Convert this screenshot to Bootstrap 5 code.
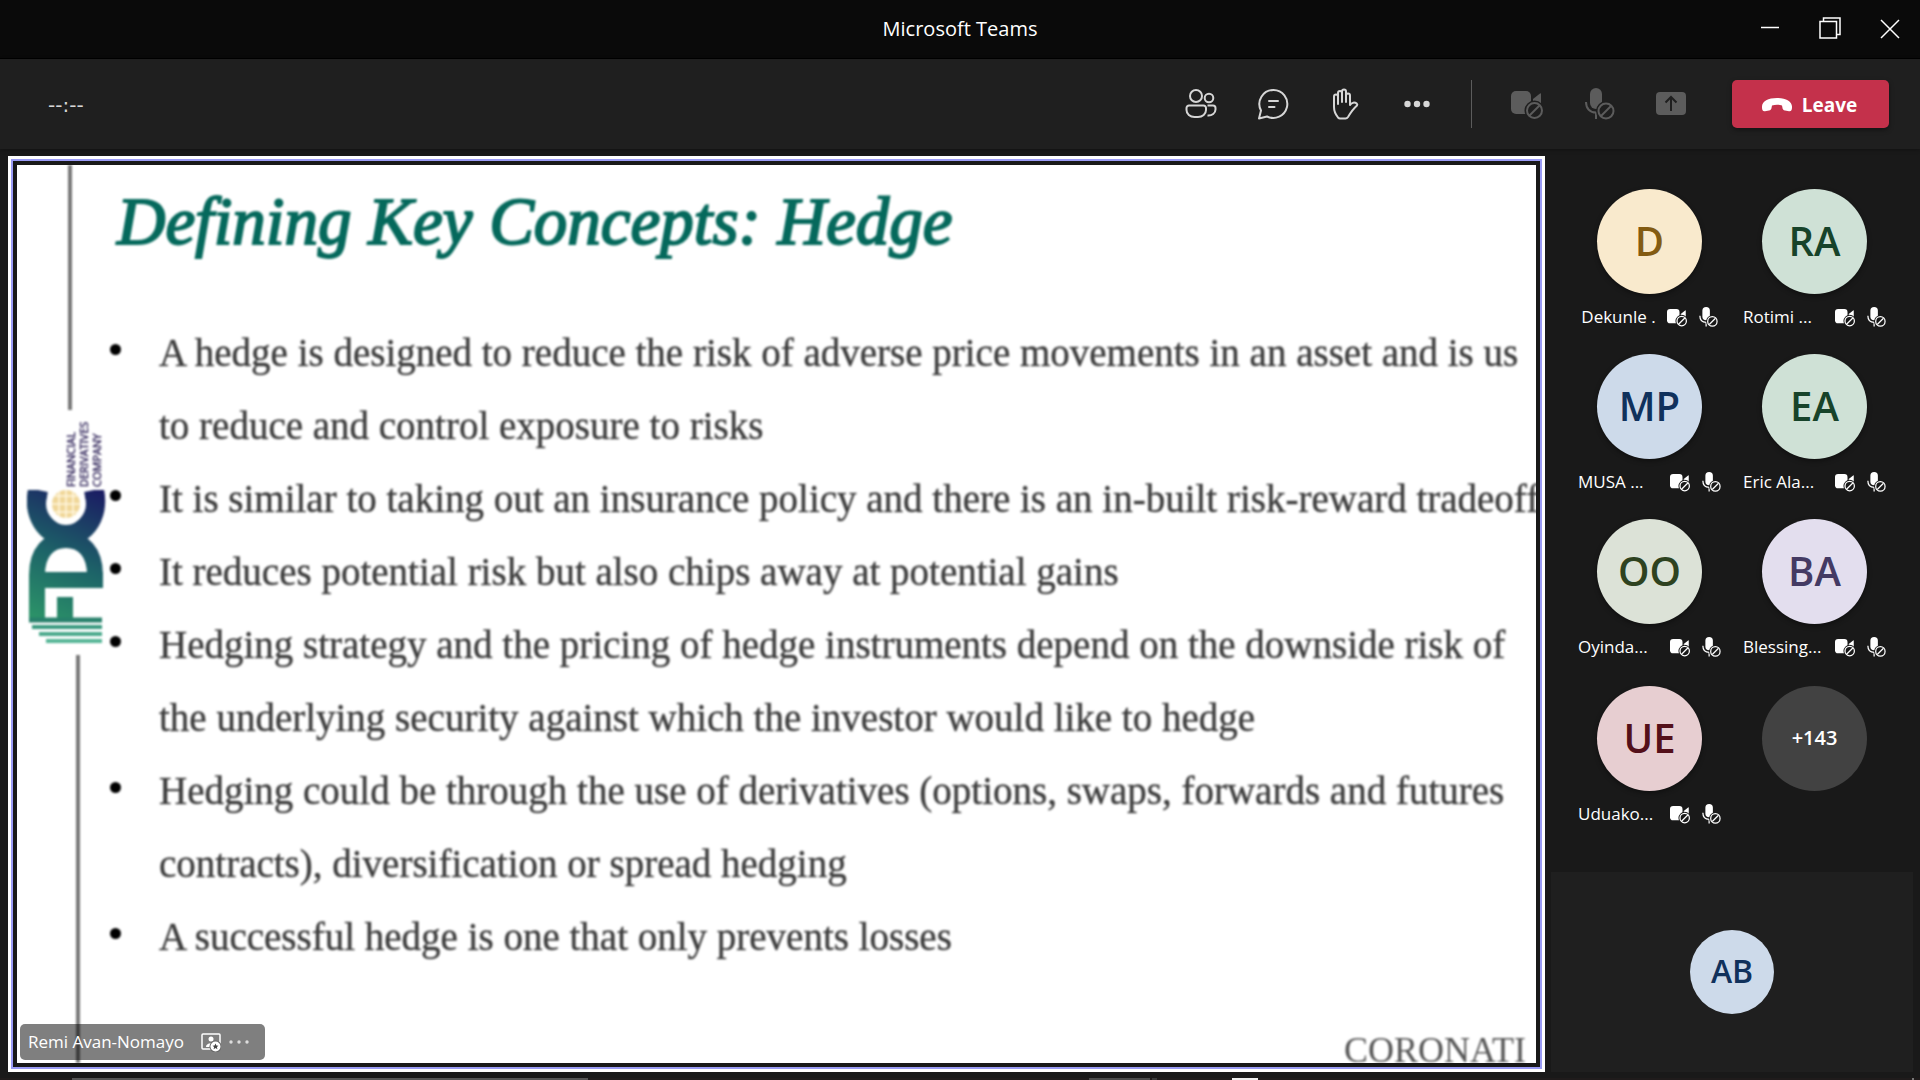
<!DOCTYPE html>
<html lang="en">
<head>
<meta charset="utf-8">
<meta name="viewport" content="width=device-width, initial-scale=1">
<title>Microsoft Teams</title>
<link rel="stylesheet" href="https://cdn.jsdelivr.net/npm/bootstrap@5.3.0/dist/css/bootstrap.min.css">
<style>
  body { background: #191919; color: #fff; font-family: "Open Sans", "Noto Sans", sans-serif; font-size: 17px; line-height: 24px; }
  .titlebar { height: 59px; background: #0a0a0a; border-bottom: 1px solid #000; font-size: 20px; }
  .titlebar-side { flex: 1 1 0; }
  .win-btn { width: 60px; height: 58px; padding: 0 0 4px; border: 0; background: none; color: #fff; }
  .toolbar { height: 90px; background: #1f1f1f; padding: 0 31px 0 48px; box-shadow: 0 1px 4px rgba(0,0,0,.3); }
  .elapsed { font-family: "DejaVu Sans", sans-serif; font-size: 20px; color: #d6d6d6; padding-top: 2px; }
  .tool { width: 72px; height: 48px; padding: 0; border: 0; background: none; color: #d6d6d6; --cut: #1f1f1f; }
  .tool:disabled { color: #5c5c5c; }
  .tool-divider { width: 1px; height: 48px; margin: 0 19px 0 18px; background: #5c5c5c; }
  .leave, .leave:hover { width: 157px; height: 48px; margin-left: 25px; padding: 2px 4px 0 0; border: 0; border-radius: 5px; background: #c4314b; color: #fff; font-size: 19px; font-weight: 700; box-shadow: 0 2px 5px rgba(0,0,0,.4); }
  .meeting { padding: 7px 7px 6px 8px; gap: 6px; min-height: 0; }
  .stage { border: 3px solid #fff; min-width: 0; }
  .stage-ring { border: 2px solid #9a9bf5; padding: 4px; background: #191919; min-width: 0; }
  .slide { background: #fff; color: #3c3c3c; font-family: "Liberation Serif", serif; min-width: 0; }
  .slide-rail { width: 86px; flex: none; padding-left: 10px; }
  .rail-line { width: 4px; background: #777; }
  .rail-top { height: 245px; margin-left: 41px; }
  .rail-bottom { margin-left: 49px; }
  .slide-title { margin: 11px 0 0 14px; font-size: 67px; line-height: 90px; font-style: italic; font-weight: 400; color: #05695c; -webkit-text-stroke: 2px #05695c; white-space: nowrap; }
  .points { margin: 50px 0 0; padding: 0; list-style: none; font-size: 39px; line-height: 73px; -webkit-text-stroke: 1px rgba(60,60,60,.4); }
  .points li { position: relative; padding-left: 56px; white-space: nowrap; }
  .points li::before { content: ""; position: absolute; left: 7px; top: 28px; width: 11px; height: 11px; border-radius: 50%; background: #000; }
  .soft { filter: blur(1px); }
  .maker { right: 0; bottom: -2px; width: 192px; font-size: 36px; line-height: 30px; color: #555; white-space: nowrap; }
  .presenter { left: 3px; bottom: 3px; width: 245px; height: 36px; padding: 0 8px; border-radius: 5px; background: rgba(0,0,0,.5); color: #fff; font-family: "Open Sans", sans-serif; font-size: 17px; }
  .presenter button { padding: 0; border: 0; background: none; color: #ddd; line-height: 0; }
  .people-pane { width: 362px; flex: none; }
  .roster { width: 330px; margin: 33px auto 0; }
  .tile { width: 165px; height: 165px; }
  .last-row { padding-top: 2px; }
  .avatar { width: 105px; height: 105px; padding: 0 0 2px; border-radius: 50%; font-size: 40px; font-weight: 600; box-shadow: 0 2px 5px rgba(0,0,0,.4); }
  .avatar-sm { width: 84px; height: 84px; font-size: 32px; box-shadow: none; }
  .more-people { border: 0; background: #424242; color: #fff; font-size: 20px; box-shadow: none; }
  .who { margin-top: 10px; height: 26px; gap: 11px; --cut: #191919; }
  .who-name { width: 81px; white-space: nowrap; }
  .who-name.short { width: auto; }
  .gold { background: #f9eacd; color: #835b12; }
  .green { background: #cfe1d6; color: #17432a; }
  .blue { background: #cddaea; color: #10315c; }
  .olive { background: #dce2d7; color: #2e4220; }
  .violet { background: #e3deee; color: #443a63; }
  .rose { background: #e7ced1; color: #54101a; }
  .self-view { height: 200px; background: #1f1f1f; }
  .desk-edge { height: 2px; background: #1f1b1b; }
</style>
</head>
<body class="vh-100 d-flex flex-column overflow-hidden">

<svg class="d-none" aria-hidden="true">
  <symbol id="i-nocam" viewBox="0 0 32 32">
    <rect x="0" y="3" width="20" height="23" rx="5" fill="currentColor"/>
    <path d="M22 11l7-5.500q1-.6 1 .6V18l-8-4z" fill="currentColor"/>
    <circle cx="23.500" cy="22.500" r="10" fill="var(--cut)"/>
    <circle cx="23.500" cy="22.500" r="7.500" fill="none" stroke="currentColor" stroke-width="2"/>
    <path d="M18.500 27.500l10-10" stroke="currentColor" stroke-width="2"/>
  </symbol>
  <symbol id="i-nomic" viewBox="0 0 32 32">
    <rect x="7" y="0" width="12" height="21" rx="6" fill="currentColor"/>
    <path d="M3 14c0 6.500 4 10.500 10 10.500M13 24v7" fill="none" stroke="currentColor" stroke-width="2"/>
    <circle cx="23" cy="23" r="10" fill="var(--cut)"/>
    <circle cx="23" cy="23" r="7.500" fill="none" stroke="currentColor" stroke-width="2"/>
    <path d="M18 28l10-10" stroke="currentColor" stroke-width="2"/>
  </symbol>
</svg>

<header class="titlebar d-flex align-items-center flex-shrink-0">
  <div class="titlebar-side"></div>
  <div>Microsoft Teams</div>
  <div class="titlebar-side d-flex justify-content-end">
    <button class="win-btn" type="button" aria-label="Minimise"><svg width="20" height="22" viewBox="0 0 20 22"><path d="M1 10.500h18" stroke="currentColor" stroke-width="1.500"/></svg></button>
    <button class="win-btn" type="button" aria-label="Restore"><svg width="22" height="22" viewBox="0 0 22 22" fill="none" stroke="currentColor" stroke-width="1.500"><path d="M1 4.500h16.500V21H1zM4.500 4.500V1H21v16.500h-3.500"/></svg></button>
    <button class="win-btn" type="button" aria-label="Close"><svg width="20" height="20" viewBox="0 0 20 20"><path d="M1 1l18 18M19 1L1 19" stroke="currentColor" stroke-width="1.500"/></svg></button>
  </div>
</header>

<nav class="toolbar d-flex align-items-center flex-shrink-0 position-relative" aria-label="Meeting controls">
  <span class="elapsed me-auto">--:--</span>
  <button class="tool" type="button" aria-label="Participants"><svg width="32" height="32" viewBox="0 0 32 32" fill="none" stroke="currentColor" stroke-width="2"><circle cx="11" cy="8" r="6"/><circle cx="24" cy="10" r="4.300"/><path d="M4 17.500h14.500a2.500 2.500 0 0 1 2.500 2.500v2c0 4-3.500 7-8 7h-3.500c-4.500 0-8-3-8-7v-2A2.500 2.500 0 0 1 4 17.500zM22.500 17.500H28a2.500 2.500 0 0 1 2.500 2.500v1.500c0 3.500-3.500 6.500-8 6"/></svg></button>
  <button class="tool" type="button" aria-label="Conversation"><svg width="32" height="32" viewBox="0 0 32 32" fill="none" stroke="currentColor" stroke-width="2" stroke-linejoin="round" stroke-linecap="round"><path d="M16.500 2A14 14 0 1 1 10 28.500L2 30.500 4 22.500A14 14 0 0 1 16.500 2zM12 13h9M12 19h5.500"/></svg></button>
  <button class="tool" type="button" aria-label="Raise hand"><svg width="32" height="32" viewBox="-1 0 32 32" fill="none" stroke="currentColor" stroke-width="2" stroke-linecap="round" stroke-linejoin="round"><path d="M8 16V8.500a2 2 0 0 0-4 0V19c0 5 2 8 4 10.500q1 1 2 1h5.500q1.500 0 2.500-1.500c3-5 5-8 9-11.500q.7-1-.2-1.900c-2-1.500-5-1.500-6.800 1.400V7.500a2 2 0 0 0-4 0V14M8 14V5a2 2 0 0 1 4 0v9M12 14V3.500a2 2 0 0 1 4 0V14"/></svg></button>
  <button class="tool" type="button" aria-label="More actions"><svg width="32" height="32" viewBox="0 0 32 32" fill="currentColor"><circle cx="6.500" cy="16" r="3.200"/><circle cx="16" cy="16" r="3.200"/><circle cx="25.500" cy="16" r="3.200"/></svg></button>
  <span class="tool-divider"></span>
  <button class="tool" type="button" disabled aria-label="Camera off"><svg width="32" height="32"><use href="#i-nocam"/></svg></button>
  <button class="tool" type="button" disabled aria-label="Microphone off"><svg width="32" height="32"><use href="#i-nomic"/></svg></button>
  <button class="tool" type="button" disabled aria-label="Share"><svg width="32" height="32" viewBox="0 0 32 32"><rect x="1" y="4" width="30" height="23" rx="4" fill="currentColor"/><path d="M16 23V10M10.500 14.500L16 9l5.500 5.500" fill="none" stroke="#1f1f1f" stroke-width="2"/></svg></button>
  <button class="leave btn d-flex align-items-center justify-content-center gap-2" type="button"><svg width="34" height="16" viewBox="0 0 34 16"><path d="M2 10.500C1.500 4.500 8 1 17 1s15.500 3.500 15 9.500c0 2.500-.8 4-3 3.700l-4-.7c-1.600-.3-2.400-1.200-2.600-3L22 8.500c-3-1-7-1-10 0l-.4 2c-.2 1.800-1 2.700-2.600 3l-4 .7c-2.200.3-3-1.200-3-3.700z" fill="#fff"/></svg>Leave</button>
</nav>

<main class="meeting d-flex flex-fill">
  <section class="stage d-flex flex-fill" aria-label="Shared content">
    <div class="stage-ring d-flex flex-fill">
      <article class="slide d-flex flex-fill position-relative overflow-hidden">
        <div class="slide-rail d-flex flex-column soft">
          <div class="rail-line rail-top"></div>
          <svg width="84" height="245" viewBox="0 0 84 245" role="img" aria-label="FDC logo">
            <defs>
              <linearGradient id="fdc" gradientUnits="userSpaceOnUse" x1="10" y1="225" x2="76" y2="80"><stop offset="0" stop-color="#2f9d68"/><stop offset=".5" stop-color="#1d6468"/><stop offset="1" stop-color="#1b1a63"/></linearGradient>
            </defs>
            <g fill="none" stroke="url(#fdc)" stroke-width="16">
              <path d="M11 80C6 104 18 125 39 125S72 104 67 80" stroke-width="20"/>
              <path d="M10 210V165C10 142 22 130 39 130S68 142 68 165V170M10 170H76"/>
              <path d="M38 187V210"/>
            </g>
            <g fill="none" stroke-width="4">
              <path d="M2 210H75" stroke="#27806a" stroke-width="5"/>
              <path d="M5 217H75" stroke="#3a9a80"/>
              <path d="M12 224H75" stroke="#4aa98c"/>
              <path d="M19 231H75" stroke="#55b596"/>
            </g>
            <path d="M0 66H78V80H0z" fill="#fff"/>
            <circle cx="39" cy="94" r="20" fill="#fff"/>
            <circle cx="39" cy="94" r="14" fill="#f0d79a"/>
            <path d="M25 94H53M28 86H50M28 102H50M39 80V108M32 82V106M46 82V106" stroke="#fff8e0" stroke-width="1.500"/>
            <g fill="#3d3264" stroke="#3d3264" stroke-width=".5" font-family="Open Sans, sans-serif" font-size="11">
              <text transform="translate(48 77) rotate(-90)">FINANCIAL</text>
              <text transform="translate(61 77) rotate(-90)">DERIVATIVES</text>
              <text transform="translate(74 77) rotate(-90)">COMPANY</text>
            </g>
          </svg>
          <div class="rail-line rail-bottom flex-fill"></div>
        </div>
        <div class="soft">
          <h1 class="slide-title">Defining Key Concepts: Hedge</h1>
          <ul class="points">
            <li>A hedge is designed to reduce the risk of adverse price movements in an asset and is us<br>to reduce and control exposure to risks</li>
            <li>It is similar to taking out an insurance policy and there is an in-built risk-reward tradeoff</li>
            <li>It reduces potential risk but also chips away at potential gains</li>
            <li>Hedging strategy and the pricing of hedge instruments depend on the downside risk of<br>the underlying security against which the investor would like to hedge</li>
            <li>Hedging could be through the use of derivatives (options, swaps, forwards and futures<br>contracts), diversification or spread hedging</li>
            <li>A successful hedge is one that only prevents losses</li>
          </ul>
        </div>
        <div class="maker soft position-absolute">CORONATI</div>
        <div class="presenter position-absolute d-flex align-items-center">
          <span class="me-auto">Remi Avan-Nomayo</span>
          <svg class="me-2" width="20" height="20" viewBox="0 0 20 20"><rect x="1" y="2" width="18" height="15" rx="1" fill="none" stroke="#fff" stroke-width="1.500"/><circle cx="10" cy="7" r="2.500" fill="#fff"/><path d="M5 15c0-5 10-5 10 0z" fill="#fff"/><circle cx="14.500" cy="14.500" r="6" fill="#666"/><circle cx="14.500" cy="14.500" r="5" fill="#fff"/><path d="M14.500 11.500l.9 2 2.100.2-1.600 1.400.5 2.100-1.900-1.100-1.900 1.100.5-2.100-1.600-1.400 2.100-.2z" fill="#444"/></svg>
          <button type="button" aria-label="Presenter options" class="me-2"><svg width="20" height="6" viewBox="0 0 20 6" fill="currentColor"><circle cx="2" cy="3" r="1.700"/><circle cx="10" cy="3" r="1.700"/><circle cx="18" cy="3" r="1.700"/></svg></button>
        </div>
      </article>
    </div>
  </section>

  <aside class="people-pane d-flex flex-column" aria-label="Participants">
    <div class="roster d-flex flex-wrap">
      <div class="tile d-flex flex-column align-items-center"><div class="avatar gold d-flex align-items-center justify-content-center">D</div><div class="who d-flex align-items-center"><span class="who-name short">Dekunle .</span><svg width="20" height="20"><use href="#i-nocam"/></svg><svg width="20" height="20"><use href="#i-nomic"/></svg></div></div>
      <div class="tile d-flex flex-column align-items-center"><div class="avatar green d-flex align-items-center justify-content-center">RA</div><div class="who d-flex align-items-center"><span class="who-name">Rotimi ...</span><svg width="20" height="20"><use href="#i-nocam"/></svg><svg width="20" height="20"><use href="#i-nomic"/></svg></div></div>
      <div class="tile d-flex flex-column align-items-center"><div class="avatar blue d-flex align-items-center justify-content-center">MP</div><div class="who d-flex align-items-center"><span class="who-name">MUSA ...</span><svg width="20" height="20"><use href="#i-nocam"/></svg><svg width="20" height="20"><use href="#i-nomic"/></svg></div></div>
      <div class="tile d-flex flex-column align-items-center"><div class="avatar green d-flex align-items-center justify-content-center">EA</div><div class="who d-flex align-items-center"><span class="who-name">Eric Ala...</span><svg width="20" height="20"><use href="#i-nocam"/></svg><svg width="20" height="20"><use href="#i-nomic"/></svg></div></div>
      <div class="tile d-flex flex-column align-items-center"><div class="avatar olive d-flex align-items-center justify-content-center">OO</div><div class="who d-flex align-items-center"><span class="who-name">Oyinda...</span><svg width="20" height="20"><use href="#i-nocam"/></svg><svg width="20" height="20"><use href="#i-nomic"/></svg></div></div>
      <div class="tile d-flex flex-column align-items-center"><div class="avatar violet d-flex align-items-center justify-content-center">BA</div><div class="who d-flex align-items-center"><span class="who-name">Blessing...</span><svg width="20" height="20"><use href="#i-nocam"/></svg><svg width="20" height="20"><use href="#i-nomic"/></svg></div></div>
      <div class="tile last-row d-flex flex-column align-items-center"><div class="avatar rose d-flex align-items-center justify-content-center">UE</div><div class="who d-flex align-items-center"><span class="who-name">Uduako...</span><svg width="20" height="20"><use href="#i-nocam"/></svg><svg width="20" height="20"><use href="#i-nomic"/></svg></div></div>
      <div class="tile last-row d-flex flex-column align-items-center"><button type="button" class="avatar more-people">+143</button></div>
    </div>
    <div class="self-view mt-auto d-flex align-items-center justify-content-center"><div class="avatar avatar-sm blue d-flex align-items-center justify-content-center">AB</div></div>
  </aside>
</main>

<svg class="desk-edge d-block w-100 flex-shrink-0" viewBox="0 0 1920 2" preserveAspectRatio="none" aria-hidden="true">
  <path d="M72 0h516v2H72z" fill="#555"/><path d="M1089 0h61v2h-61z" fill="#4a4a4a"/><path d="M1152 0h5v2h-5z" fill="#3a3a3a"/><path d="M1232 0h26v2h-26z" fill="#eee"/><path d="M1912 0h2v2h-2z" fill="#777"/>
</svg>
<script src="https://cdn.jsdelivr.net/npm/bootstrap@5.3.0/dist/js/bootstrap.bundle.min.js"></script>
</body>
</html>
